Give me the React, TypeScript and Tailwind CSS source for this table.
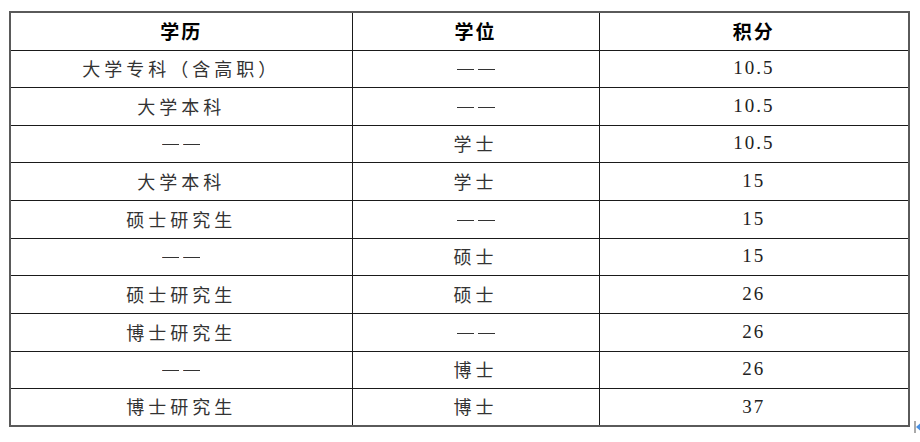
import React from "react";

const rows: [string, string, string][] = [
  ["大学专科（含高职）", "——", "10.5"],
  ["大学本科", "——", "10.5"],
  ["——", "学士", "10.5"],
  ["大学本科", "学士", "15"],
  ["硕士研究生", "——", "15"],
  ["——", "硕士", "15"],
  ["硕士研究生", "硕士", "26"],
  ["博士研究生", "——", "26"],
  ["——", "博士", "26"],
  ["博士研究生", "博士", "37"],
];

const heights = [
  "h-[37px]",
  "h-[38px]",
  "h-[37px]",
  "h-[38px]",
  "h-[38px]",
  "h-[37px]",
  "h-[38px]",
  "h-[38px]",
  "h-[37px]",
  "h-[38px]",
];

function Cell({ text }: { text: string }) {
  const isNum = /^[0-9.]+$/.test(text);
  const isDash = text === "——";
  return (
    <td className="border-[1.5px] border-[#1a1a1a] p-0 text-center align-middle">
      {isNum ? (
        <span className="text-[19px] tracking-[2px] text-[#222] [font-family:'Liberation_Serif','Noto_Sans_CJK_SC',serif]">
          {text}
        </span>
      ) : isDash ? (
        <span className="inline-flex gap-[4px] text-[18px] text-[#333] [font-family:'Liberation_Serif',serif]">
          <span className="inline-block w-[17px] overflow-hidden">—</span>
          <span className="inline-block w-[17px] overflow-hidden">—</span>
        </span>
      ) : (
        <span className="text-[18px] tracking-[4px] text-[#333] [font-family:'Noto_Sans_CJK_SC',sans-serif]">
          {text}
        </span>
      )}
    </td>
  );
}

export default function App() {
  return (
    <div className="relative h-[442px] w-[920px] bg-white">
      <div className="pl-[9px] pt-[11px]">
        <table className="w-[899px] table-fixed border-collapse border-2 border-[#5a5a5a]">
          <colgroup>
            <col className="w-[342px]" />
            <col className="w-[247px]" />
            <col className="w-[310px]" />
          </colgroup>
          <thead>
            <tr className="h-[38px]">
              {["学历", "学位", "积分"].map((h) => (
                <th
                  key={h}
                  className="border-[1.5px] border-[#1a1a1a] p-0 text-center align-middle text-[19px] font-bold tracking-[2px] text-black [font-family:'Noto_Sans_CJK_SC',sans-serif]"
                >
                  {h}
                </th>
              ))}
            </tr>
          </thead>
          <tbody>
            {rows.map((r, i) => (
              <tr key={i} className={heights[i]}>
                <Cell text={r[0]} />
                <Cell text={r[1]} />
                <Cell text={r[2]} />
              </tr>
            ))}
          </tbody>
        </table>
      </div>
      <svg
        className="absolute left-[913px] top-[420px]"
        width="7"
        height="14"
        viewBox="0 0 7 14"
      >
        <line x1="2" y1="1" x2="2" y2="13" stroke="#555" strokeWidth="1" />
        <polygon points="3,7 7,3.5 7,10.5" fill="#4a90e2" />
      </svg>
    </div>
  );
}
